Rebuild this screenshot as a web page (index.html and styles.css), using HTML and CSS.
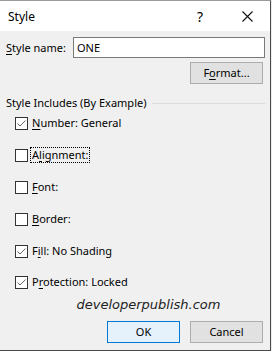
FILE: index.html
```html
<!DOCTYPE html>
<html>
<head>
<meta charset="utf-8">
<link rel="stylesheet" href="styles.css">
</head>
<body>
<div class="dialog">
  <div class="titlebar">
    <span class="title">Style</span>
    <span class="help">?</span>
    <span class="close"><svg width="11" height="11" viewBox="0 0 11 11"><path d="M0.5 0.5 L10.5 10.5 M10.5 0.5 L0.5 10.5" stroke="#111" stroke-width="1.1" fill="none"/></svg></span>
  </div>
  <div class="content">
    <div class="name-row">
      <span class="name-label"><u>S</u>tyle name:</span>
      <div class="input">ONE</div>
    </div>
    <div class="format-row">
      <div class="btn">F<u>o</u>rmat...</div>
    </div>
    <div class="group-head">
      <span>Style Includes (By Example)</span>
      <span class="rule"></span>
    </div>
    <div class="checks">
      <div class="check"><span class="box checked"><svg width="11" height="11" viewBox="0 0 11 11"><path d="M1.5 5.5 L4 8 L9.5 2.5" stroke="#666" stroke-width="1" fill="none"/></svg></span><span class="lbl"><u>N</u>umber: General</span></div>
      <div class="check"><span class="box"></span><span class="lbl focus">A<u>l</u>ignment:</span></div>
      <div class="check"><span class="box"></span><span class="lbl"><u>F</u>ont:</span></div>
      <div class="check"><span class="box"></span><span class="lbl"><u>B</u>order:</span></div>
      <div class="check"><span class="box checked"><svg width="11" height="11" viewBox="0 0 11 11"><path d="M1.5 5.5 L4 8 L9.5 2.5" stroke="#666" stroke-width="1" fill="none"/></svg></span><span class="lbl">F<u>i</u>ll: No Shading</span></div>
      <div class="check"><span class="box checked"><svg width="11" height="11" viewBox="0 0 11 11"><path d="M1.5 5.5 L4 8 L9.5 2.5" stroke="#666" stroke-width="1" fill="none"/></svg></span><span class="lbl">P<u>r</u>otection: Locked</span></div>
    </div>
    <div class="watermark">developerpublish.com</div>
    <div class="buttons">
      <div class="btn primary">OK</div>
      <div class="btn">Cancel</div>
    </div>
  </div>
</div>
</body>
</html>
```
FILE: styles.css
```css
html { background: #ececec; }
body {
  margin: 0;
  font-family: "Noto Sans", "Open Sans", sans-serif;
  font-size: 11px;
  color: #000;
}
u { text-decoration: underline; text-underline-offset: 2px; }
.dialog {
  width: 270px;
  height: 349px;
  background: #f0f0f0;
  border-top: 1px solid #9a9a9a;
  border-right: 1px solid #4a4a4a;
  border-bottom: 1px solid #4a4a4a;
  display: flex;
  flex-direction: column;
}
.titlebar {
  height: 30px;
  background: #fff;
  display: flex;
  align-items: center;
  padding-left: 8px;
  flex-shrink: 0;
}
.title { font-size: 12px; flex: 1; }
.help { font-size: 14px; width: 8px; margin-right: 37px; }
.close { width: 11px; height: 11px; margin-right: 17px; display: flex; margin-top: 1px; }
.content {
  padding: 0 5px 0 6px;
  display: flex;
  flex-direction: column;
}
.name-row {
  display: flex;
  align-items: center;
  margin-top: 6px;
  height: 21px;
}
.name-label { width: 67px; }
.input {
  flex: 1;
  height: 21px;
  box-sizing: border-box;
  border: 1px solid #7a7a7a;
  background: #fff;
  padding-left: 3px;
  line-height: 19px;
}
.format-row {
  display: flex;
  justify-content: flex-end;
  margin-top: 4px;
  padding-right: 2px;
}
.btn {
  width: 73px;
  height: 22px;
  box-sizing: border-box;
  border: 1px solid #adadad;
  background: #e1e1e1;
  text-align: center;
  line-height: 20px;
}
.btn.primary {
  border-color: #0078d7;
  background: #e5f1fb;
}
.group-head {
  display: flex;
  align-items: center;
  margin-top: 11px;
  height: 16px;
  line-height: 16px;
}
.rule {
  flex: 1;
  height: 1px;
  background: #dcdcdc;
  margin-left: 6px;
}
.checks {
  display: flex;
  flex-direction: column;
  gap: 16px;
  margin-top: 4px;
  padding-left: 9px;
}
.check {
  display: flex;
  align-items: center;
  height: 16px;
}
.check:last-child { margin-top: -1px; }
.box {
  width: 13px;
  height: 13px;
  box-sizing: border-box;
  border: 1px solid #333;
  background: #fff;
  display: flex;
  align-items: center;
  justify-content: center;
}
.lbl {
  margin-left: 2px;
  border: 1px solid transparent;
  padding: 0 1px;
  line-height: 14px;
}
.lbl.focus { border: 1px dotted #000; }
.watermark {
  margin-top: 5px;
  height: 20px;
  line-height: 20px;
  text-align: center;
  font-family: "DejaVu Sans", sans-serif;
  font-style: italic;
  font-size: 13px;
  color: #222;
  padding-left: 26px;
}
.buttons {
  display: flex;
  justify-content: flex-end;
  gap: 10px;
  margin-top: 6px;
  padding-right: 2px;
}
```
